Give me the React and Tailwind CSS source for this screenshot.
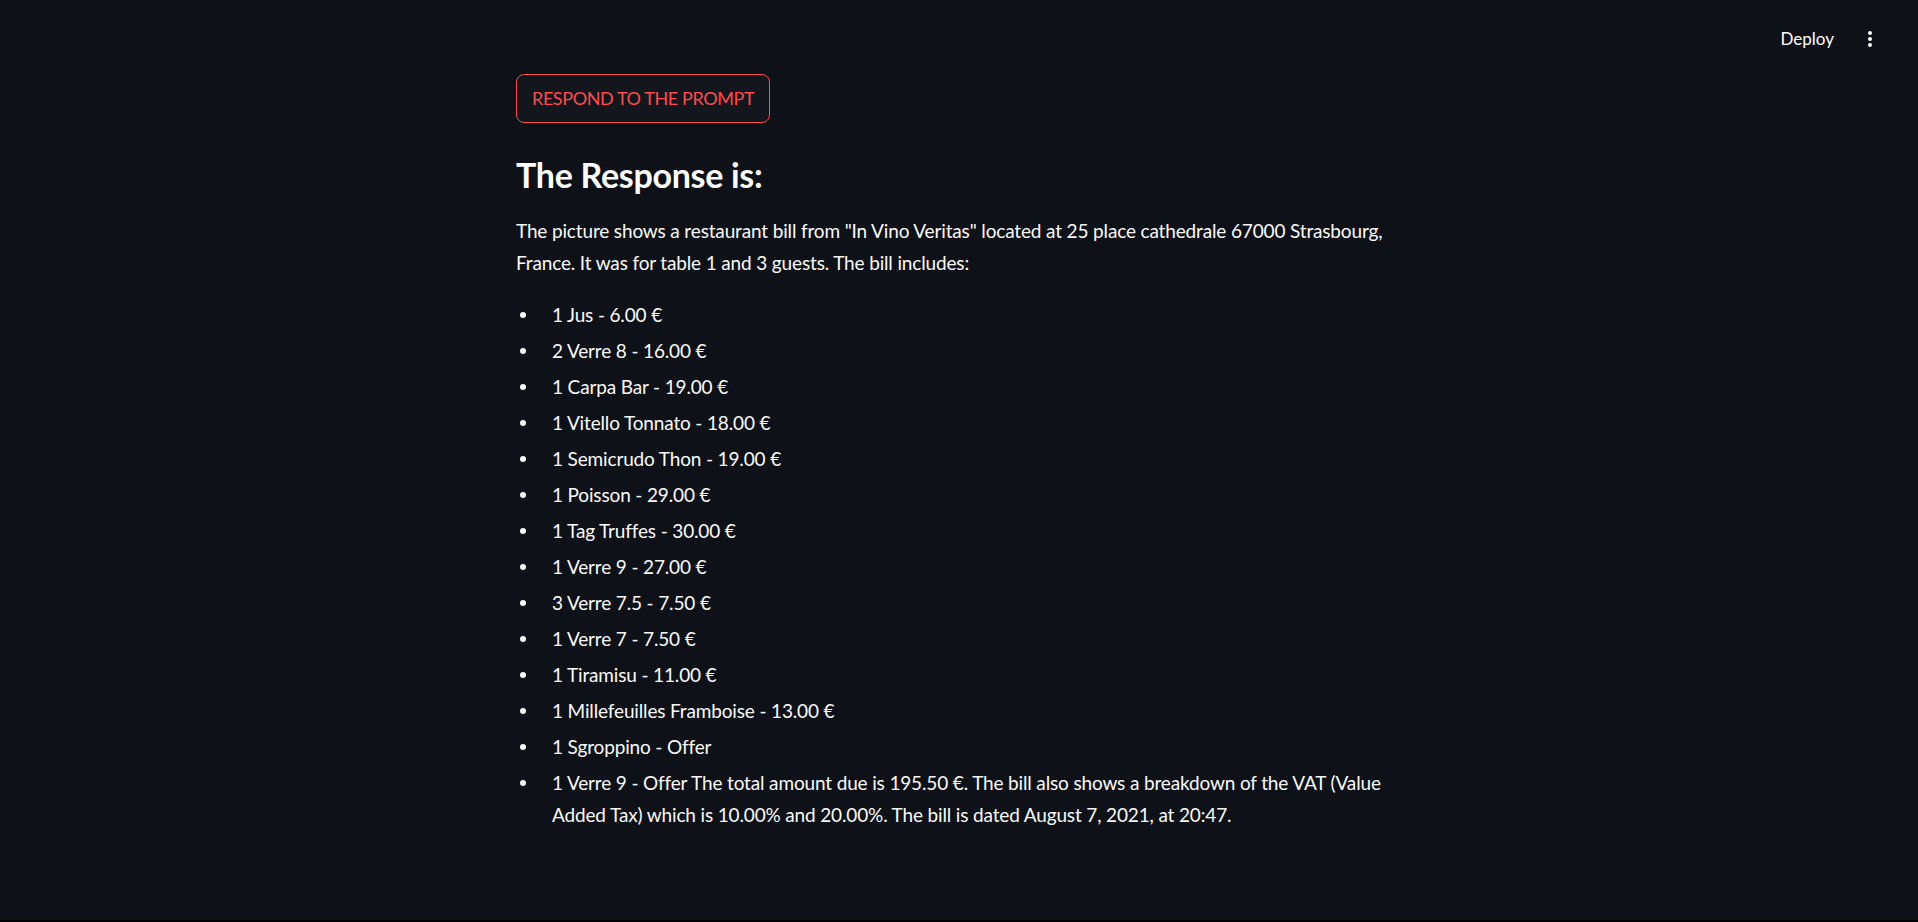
import React from "react";

const items = [
    "1 Jus - 6.00 €",
    "2 Verre 8 - 16.00 €",
    "1 Carpa Bar - 19.00 €",
    "1 Vitello Tonnato - 18.00 €",
    "1 Semicrudo Thon - 19.00 €",
    "1 Poisson - 29.00 €",
    "1 Tag Truffes - 30.00 €",
    "1 Verre 9 - 27.00 €",
    "3 Verre 7.5 - 7.50 €",
    "1 Verre 7 - 7.50 €",
    "1 Tiramisu - 11.00 €",
    "1 Millefeuilles Framboise - 13.00 €",
    "1 Sgroppino - Offer",
    "1 Verre 9 - Offer The total amount due is 195.50 €. The bill also shows a breakdown of the VAT (Value Added Tax) which is 10.00% and 20.00%. The bill is dated August 7, 2021, at 20:47.",
];

export default function App() {
    return (
        <div className="w-[1918px] bg-black font-['Lato',sans-serif] text-[#fafafa]">
            <div className="h-[920px] bg-[#0e1117] flex flex-col">
                <header className="h-[78px] flex items-center justify-end pr-[45px] gap-[33px]">
                    <span className="text-[17px] text-white">Deploy</span>
                    <svg width="6" height="18" viewBox="0 0 6 18" fill="#fafafa">
                        <circle cx="3" cy="3" r="2" />
                        <circle cx="3" cy="9" r="2" />
                        <circle cx="3" cy="15" r="2" />
                    </svg>
                </header>

                <main className="w-[886px] ml-[516px] -mt-[4px]">
                    <button className="h-[49px] px-[15px] rounded-[8px] border border-[#ff4b4b] bg-[#13161d] text-[#ff4b4b] text-[18px] tracking-[-0.4px]">
                        RESPOND TO THE PROMPT
                    </button>

                    <h3 className="mt-[30px] text-[34px] font-bold leading-[44px] text-white tracking-[-0.3px]">
                        The Response is:
                    </h3>

                    <p className="mt-[18px] text-[19px] leading-[32px] tracking-[-0.15px]">
                        The picture shows a restaurant bill from "In Vino Veritas" located at 25 place cathedrale 67000 Strasbourg, France. It was for table 1 and 3 guests. The bill includes:
                    </p>

                    <ul className="mt-[20px] text-[19px] leading-[32px] tracking-[-0.15px]">
                        {items.map((item, i) => (
                            <li key={i} className="mb-[4px] flex">
                                <span className="w-[36px] shrink-0 flex justify-start pl-[4px] pt-[13px]">
                                    <span className="w-[6px] h-[6px] rounded-full bg-[#fafafa]" />
                                </span>
                                <span>{item}</span>
                            </li>
                        ))}
                    </ul>
                </main>
            </div>
            <div className="h-[2px] bg-black" />
        </div>
    );
}
